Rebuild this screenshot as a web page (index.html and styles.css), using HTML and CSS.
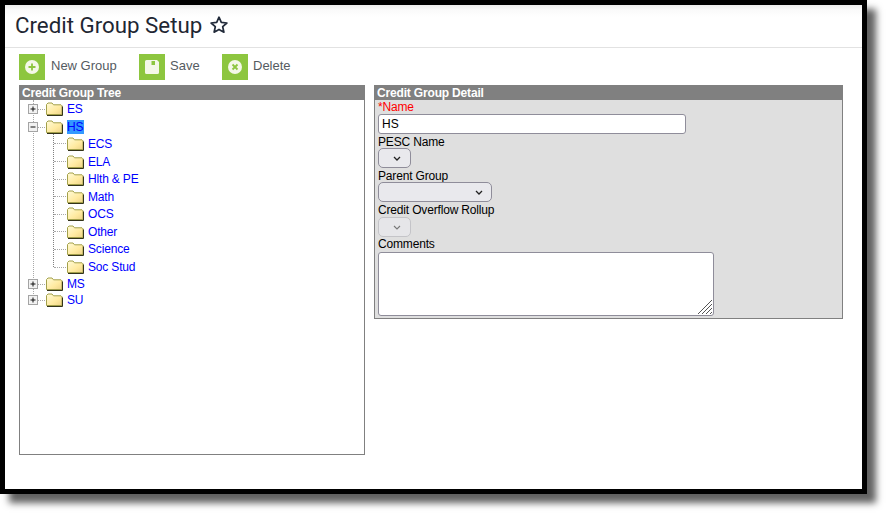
FILE: index.html
```html
<!DOCTYPE html>
<html lang="en">
<head>
<meta charset="utf-8">
<title>Credit Group Setup</title>
<link rel="stylesheet" href="styles.css">
</head>
<body>
<svg class="defs" width="0" height="0" aria-hidden="true">
  <defs>
    <linearGradient id="fold" x1="0" y1="0" x2="1" y2="1">
      <stop offset="0" stop-color="#fffbd8"/>
      <stop offset=".6" stop-color="#ffeaa0"/>
      <stop offset="1" stop-color="#ecd28a"/>
    </linearGradient>
    <symbol id="folder" viewBox="0 0 17 14">
      <path d="M.5 12.500V2.500L2 1h4l1.500 1.800H15l1 1V12.500z" fill="url(#fold)" stroke="#a3a04a"/>
      <path d="M1 13.500H16.500V4.500" fill="none" stroke="#33331a"/>
    </symbol>
    <symbol id="plus" viewBox="0 0 10 10">
      <rect x=".5" y=".5" width="9" height="9" fill="#f2f2f2" stroke="#a4a4a4"/>
      <path d="M2.500 5H7.500M5 2.500V7.500" stroke="#111"/>
    </symbol>
    <symbol id="minus" viewBox="0 0 10 10">
      <rect x=".5" y=".5" width="9" height="9" fill="#f2f2f2" stroke="#a4a4a4"/>
      <path d="M2.500 5H7.500" stroke="#111"/>
    </symbol>
  </defs>
</svg>
<main class="window">
  <header class="title-bar">
    <h1 class="title">Credit Group Setup</h1>
    <svg class="star" viewBox="0 0 20 20" width="20" height="20" aria-hidden="true">
      <path d="M10 2.200l2.300 5.200 5.600.6-4.200 3.700 1.200 5.500L10 14.400l-4.900 2.800 1.200-5.500L2.100 8l5.600-.6z" fill="none" stroke="#222b3a" stroke-width="1.700" stroke-linejoin="round"/>
    </svg>
  </header>
  <nav class="toolbar">
    <a class="tool tool-new">
      <span class="tool-icon">
        <svg viewBox="0 0 14 14" width="14" height="14" aria-hidden="true"><circle cx="7" cy="7" r="7" fill="#f4f8e8"/><path d="M3.500 7h7M7 3.500v7" stroke="#8dc63f" stroke-width="1.800"/></svg>
      </span>New Group
    </a>
    <a class="tool tool-save">
      <span class="tool-icon">
        <svg viewBox="0 0 14 14" width="14" height="14" aria-hidden="true"><path d="M0 1.500A1.500 1.500 0 0 1 1.500 0H12l2 2v10.500a1.500 1.500 0 0 1-1.500 1.500h-11A1.500 1.500 0 0 1 0 12.500z" fill="#f4f8e8"/><rect x="4" y="1" width="6" height="4" fill="#8dc63f"/><rect x="4" y="1" width="2.500" height="4" fill="#f4f8e8"/></svg>
      </span>Save
    </a>
    <a class="tool">
      <span class="tool-icon">
        <svg viewBox="0 0 14 14" width="14" height="14" aria-hidden="true"><circle cx="7" cy="7" r="7" fill="#f4f8e8"/><path d="M4.500 4.500l5 5M9.500 4.500l-5 5" stroke="#8dc63f" stroke-width="1.800"/></svg>
      </span>Delete
    </a>
  </nav>
  <div class="panels">
    <section class="panel tree-panel">
      <h2 class="panel-head">Credit Group Tree</h2>
      <div class="tree">
        <div class="row row-es"><svg class="exp"><use href="#plus"/></svg><span class="twig"></span><svg class="fold"><use href="#folder"/></svg><a class="node">ES</a></div>
        <div class="row row-hs"><svg class="exp"><use href="#minus"/></svg><span class="twig"></span><svg class="fold"><use href="#folder"/></svg><a class="node selected">HS</a></div>
        <div class="children">
          <div class="row child"><span class="twig twig-child"></span><svg class="fold"><use href="#folder"/></svg><a class="node">ECS</a></div>
          <div class="row child"><span class="twig twig-child"></span><svg class="fold"><use href="#folder"/></svg><a class="node">ELA</a></div>
          <div class="row child"><span class="twig twig-child"></span><svg class="fold"><use href="#folder"/></svg><a class="node">Hlth &amp; PE</a></div>
          <div class="row child"><span class="twig twig-child"></span><svg class="fold"><use href="#folder"/></svg><a class="node">Math</a></div>
          <div class="row child"><span class="twig twig-child"></span><svg class="fold"><use href="#folder"/></svg><a class="node">OCS</a></div>
          <div class="row child"><span class="twig twig-child"></span><svg class="fold"><use href="#folder"/></svg><a class="node">Other</a></div>
          <div class="row child"><span class="twig twig-child"></span><svg class="fold"><use href="#folder"/></svg><a class="node">Science</a></div>
          <div class="row child"><span class="twig twig-child"></span><svg class="fold"><use href="#folder"/></svg><a class="node">Soc Stud</a></div>
        </div>
        <div class="row row-ms"><svg class="exp"><use href="#plus"/></svg><span class="twig"></span><svg class="fold"><use href="#folder"/></svg><a class="node">MS</a></div>
        <div class="row row-su"><svg class="exp"><use href="#plus"/></svg><span class="twig"></span><svg class="fold"><use href="#folder"/></svg><a class="node">SU</a></div>
      </div>
    </section>
    <section class="panel detail-panel">
      <h2 class="panel-head">Credit Group Detail</h2>
      <form class="detail">
        <label class="lbl lbl-req" for="f-name">*Name</label>
        <input class="txt" id="f-name" type="text" value="HS">
        <label class="lbl" for="f-pesc">PESC Name</label>
        <div class="sel sel-narrow" id="f-pesc"><svg class="chev" viewBox="0 0 8 5" width="8" height="5" aria-hidden="true"><path d="M1 1l3 3 3-3" fill="none" stroke="#222" stroke-width="1.300"/></svg></div>
        <label class="lbl" for="f-parent">Parent Group</label>
        <div class="sel sel-wide" id="f-parent"><svg class="chev" viewBox="0 0 8 5" width="8" height="5" aria-hidden="true"><path d="M1 1l3 3 3-3" fill="none" stroke="#222" stroke-width="1.300"/></svg></div>
        <label class="lbl lbl-spaced" for="f-over">Credit Overflow Rollup</label>
        <div class="sel sel-narrow sel-off" id="f-over"><svg class="chev" viewBox="0 0 8 5" width="8" height="5" aria-hidden="true"><path d="M1 1l3 3 3-3" fill="none" stroke="#777" stroke-width="1.100"/></svg></div>
        <label class="lbl lbl-last" for="f-com">Comments</label>
        <div class="area-wrap">
          <textarea class="area" id="f-com"></textarea>
          <svg class="grip" viewBox="0 0 15 15" width="15" height="15" aria-hidden="true"><path d="M0 15L14 1M4 15L14 5M8 15L14 9M12 15L14 13" stroke="#555" stroke-width="1" fill="none"/></svg>
        </div>
      </form>
    </section>
  </div>
</main>
</body>
</html>
```
FILE: styles.css
```css
* { box-sizing: border-box; }
html, body { margin: 0; padding: 0; }
body {
  width: 892px;
  height: 519px;
  background: #fff;
  font-family: "Liberation Sans", Arial, sans-serif;
  font-size: 12px;
  letter-spacing: -0.17px;
  overflow: hidden;
}
.defs { display: block; height: 0; }
.window {
  width: 867px;
  height: 494px;
  border: 5px solid #000;
  background: #fff;
  box-shadow: 9px 9px 7px rgba(0, 0, 0, .62);
}
.title-bar {
  height: 43px;
  display: flex;
  align-items: center;
  gap: 7px;
  padding: 0 0 2px 10px;
  border-bottom: 1px solid #e2e2e2;
  background: linear-gradient(#ececec 0, #fafafa 5px, #fff 12px);
}
.title {
  margin: 0;
  font-family: Roboto, sans-serif;
  font-weight: 400;
  font-size: 22.300px;
  letter-spacing: 0;
  color: #1f2733;
}
.star { display: block; }
.toolbar {
  display: flex;
  height: 37px;
  padding: 6px 0 0 14px;
}
.tool {
  display: flex;
  align-items: flex-start;
  color: #555b61;
  font-family: "Liberation Sans", sans-serif;
  font-size: 13px;
  letter-spacing: 0;
  line-height: 24px;
}
.tool-new { width: 120px; }
.tool-save { width: 83px; }
.tool-icon {
  width: 26px;
  height: 26px;
  margin-right: 5px;
  background: #8dc63f;
  display: flex;
  align-items: center;
  justify-content: center;
}
.tool-new .tool-icon { margin-right: 6px; }
.panels {
  display: flex;
  align-items: flex-start;
  gap: 9px;
  padding-left: 14px;
}
.panel { border: 1px solid #808080; }
.tree-panel { width: 346px; height: 370px; }
.detail-panel { width: 469px; height: 234px; background: #dfdfdf; }
.panel-head {
  margin: 0;
  height: 14px;
  padding-left: 2px;
  background: #808080;
  color: #fff;
  font-size: 12px;
  font-weight: 700;
  line-height: 14px;
}
.tree {
  position: relative;
  padding: 0 0 0 8px;
}
.tree::before {
  content: "";
  position: absolute;
  left: 13px;
  top: 0;
  height: 200px;
  border-left: 1px dotted #a8a8a8;
}
.row {
  display: flex;
  align-items: center;
  height: 17.600px;
  position: relative;
}
.row-es { height: 18px; }
.row-hs { height: 18px; }
.row-ms { height: 16px; }
.row-su { height: 16px; }
.exp { width: 10px; height: 10px; position: relative; flex: none; background: #fff; }
.twig {
  width: 7px;
  margin-right: 1px;
  border-top: 1px dotted #a8a8a8;
  flex: none;
}
.fold { width: 17px; height: 14px; flex: none; margin-right: 4px; }
.node { color: #00f; line-height: 14px; }
.selected { background: #39f; padding-right: 1px; }
.children { position: relative; margin-top: -0.9px; }
.children::before {
  content: "";
  position: absolute;
  left: 25px;
  top: -1px;
  height: 133px;
  border-left: 1px dotted #808080;
}
.child { padding-left: 26px; }
.twig-child { width: 12px; margin-right: 1px; }
.row-ms { margin-top: 0.4px; }
.detail { padding: 0 3px; display: flex; flex-direction: column; align-items: flex-start; }
.lbl { display: block; color: #000; line-height: 15px; height: 13px; }
.lbl-req { color: #f00; }
.lbl-spaced { margin-bottom: 1px; }
.lbl-last { line-height: 13px; }
.txt {
  display: block;
  width: 308px;
  height: 20px;
  margin: 1px 0 1px;
  padding: 0 3px;
  border: 1px solid #8f8d9a;
  border-radius: 3px;
  background: #fff;
  color: #000;
  font: 12px "Liberation Sans", sans-serif;
}
.sel {
  height: 20px;
  border: 1px solid #8f8d9a;
  border-radius: 5px;
  background: #e9e9ed;
  display: flex;
  align-items: center;
  justify-content: flex-end;
  margin-bottom: 1px;
}
.sel-narrow { width: 33px; padding-right: 9px; }
.sel-wide { width: 114px; padding-right: 8px; }
.sel-off { border-color: #c4c4c8; background: #e6e6e9; }
.area-wrap { position: relative; margin-top: 1px; width: 336px; height: 64px; }
.area {
  display: block;
  width: 336px;
  height: 64px;
  padding: 2px;
  border: 1px solid #8f8d9a;
  border-radius: 3px;
  background: #fff;
  resize: none;
}
.grip { position: absolute; right: 1px; bottom: 2px; }
```
